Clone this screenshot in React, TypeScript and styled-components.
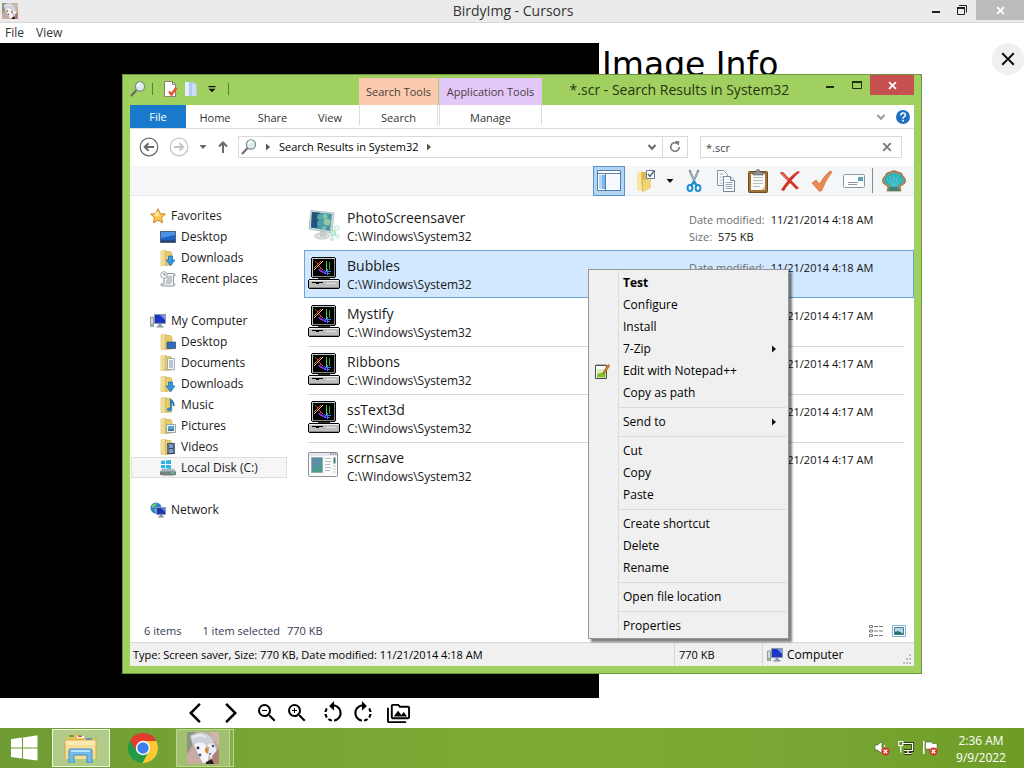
import React from 'react';
import styled, { createGlobalStyle, css } from 'styled-components';
import {
  MdArrowBackIosNew,
  MdArrowForwardIos,
  MdClose,
  MdOutlinePermMedia,
  MdRotateLeft,
  MdRotateRight,
  MdZoomIn,
  MdZoomOut,
} from 'react-icons/md';

const GlobalStyle = createGlobalStyle`
  * { box-sizing: border-box; }
  body { margin: 0; background: #fff; font-family: "Open Sans", "Noto Sans", sans-serif; font-size: 12px; line-height: 16px; color: #1a1a1a; }
  button, input { font: inherit; color: inherit; }
  ul { list-style: none; margin: 0; padding: 0; }
  svg { display: block; flex: none; }
`;

const plainButton = css`
  display: flex;
  align-items: center;
  justify-content: center;
  padding: 0;
  border: 0;
  background: none;
`;

/* ---------- Desktop and viewer window ---------- */

const Desktop = styled.div`
  position: relative;
  display: flex;
  flex-direction: column;
  min-height: 100vh;
`;

const ViewerTitleBar = styled.header`
  display: grid;
  grid-template-columns: 1fr auto 1fr;
  align-items: center;
  height: 23px;
  padding-left: 2px;
  background: #ebebeb;
  border-bottom: 1px solid #d8d8d8;
`;

const ViewerTitle = styled.h1`
  margin: 0;
  font-size: 14px;
  font-weight: 400;
  line-height: 22px;
  color: #333;
`;

const WindowButtons = styled.div`
  display: flex;
  align-self: start;
  justify-content: flex-end;
`;

const WindowButton = styled.button<{ $w: number; $bg?: string }>`
  ${plainButton}
  width: ${(p) => p.$w}px;
  height: 20px;
  background: ${(p) => p.$bg ?? 'none'};
`;

const ViewerMenu = styled.nav`
  display: flex;
  gap: 12px;
  height: 20px;
  padding-left: 5px;
  background: #fff;
`;

const ViewerMenuButton = styled.button`
  ${plainButton}
  height: 20px;
  color: #333;
`;

const ViewerBody = styled.main`
  display: grid;
  grid-template-columns: 58.5% 1fr;
  flex: 1;
`;

const ImageCanvas = styled.div`
  background: #000;
`;

const InfoPanel = styled.aside`
  display: flex;
  align-items: flex-start;
  justify-content: space-between;
  padding-left: 3px;
  background: #fff;
`;

const InfoHeading = styled.h2`
  margin: 2px 0 0;
  font-family: "DejaVu Sans", sans-serif;
  font-size: 33px;
  font-weight: 400;
  line-height: 40px;
  color: #000;
`;

const InfoClose = styled.button`
  ${plainButton}
  width: 32px;
  height: 32px;
  border-radius: 50%;
  background: #f0f0f0;
  color: #000;
`;

const ViewerTools = styled.div`
  display: flex;
  justify-content: center;
  width: 58%;
  height: 30px;
`;

const ToolPair = styled.div<{ $gap: number }>`
  display: flex;
  align-items: center;
  gap: ${(p) => p.$gap}px;
  margin: 0 6px;
`;

const ViewerTool = styled.button`
  ${plainButton}
  width: 24px;
  height: 24px;
  color: #000;
`;

/* ---------- Explorer window ---------- */

const Explorer = styled.section`
  position: absolute;
  top: 74px;
  right: 102px;
  bottom: 94px;
  left: 122px;
  display: flex;
  flex-direction: column;
  padding: 0 7px 7px;
  background: #a0d05f;
  border: 1px solid #6f9440;
`;

const ExplorerTitleBar = styled.header`
  display: flex;
  height: 30px;
`;

const QuickAccess = styled.div`
  display: flex;
  align-items: center;
  width: 229px;
  height: 28px;
`;

const QuickButton = styled.button`
  ${plainButton}
  width: 21px;
  height: 22px;
`;

const QuickRule = styled.span`
  width: 1px;
  height: 12px;
  margin: 0 6px;
  background: #5d7d35;
`;

const ContextLabel = styled.div<{ $w: number; $bg: string }>`
  width: ${(p) => p.$w}px;
  margin: 3px 1px 0 0;
  background: ${(p) => p.$bg};
  font-size: 11px;
  line-height: 28px;
  text-align: center;
  white-space: nowrap;
  color: #4a4038;
`;

const ExplorerTitle = styled.h2`
  flex: 1;
  margin: 0;
  font-size: 14px;
  font-weight: 400;
  line-height: 29px;
  text-align: center;
  white-space: nowrap;
  color: #27350f;
`;

const ExplorerPane = styled.div`
  display: flex;
  flex: 1;
  flex-direction: column;
  min-height: 0;
  background: #fff;
`;

const Ribbon = styled.div`
  display: flex;
  height: 24px;
  border-bottom: 1px solid #dadbdc;
`;

const RibbonTab = styled.button<{ $w: number; $kind?: 'file' | 'context' }>`
  ${plainButton}
  width: ${(p) => p.$w}px;
  height: 24px;
  padding-top: 2px;
  font-size: 11px;
  color: #333;
  ${(p) =>
    p.$kind === 'file' &&
    css`
      height: 23px;
      padding: 0;
      background: #1979ca;
      color: #fff;
    `}
  ${(p) =>
    p.$kind === 'context' &&
    css`
      height: 20px;
      margin-right: 1px;
      padding-top: 5px;
      border: solid #dcdcdc;
      border-width: 0 1px;
    `}
`;

const RibbonEnd = styled.div`
  display: flex;
  flex: 1;
  align-items: center;
  justify-content: flex-end;
  gap: 10px;
  padding-right: 4px;
`;

const IconButton = styled.button`
  ${plainButton}
`;

const AddressRow = styled.div`
  display: flex;
  align-items: center;
  height: 37px;
  padding: 0 12px 1px 9px;
`;

const NavButtons = styled.div`
  display: flex;
  align-items: center;
  gap: 10px;
  width: 99px;
`;

const AddressBox = styled.div`
  display: flex;
  flex: 1;
  align-items: center;
  height: 22px;
  padding-left: 2px;
  border: 1px solid #d9d9d9;
  gap: 7px;
  color: #000;
`;

const AddressText = styled.span`
  font-size: 11px;
  white-space: nowrap;
`;

const AddressEnd = styled.div`
  display: flex;
  align-items: center;
  gap: 5px;
  height: 20px;
  margin-left: auto;
`;

const RefreshButton = styled.button`
  ${plainButton}
  width: 25px;
  height: 20px;
  border-left: 1px solid #d9d9d9;
`;

const SearchBox = styled.label`
  display: flex;
  align-items: center;
  width: 202px;
  height: 22px;
  margin-left: 12px;
  padding: 0 9px 0 5px;
  border: 1px solid #d9d9d9;
`;

const SearchInput = styled.input`
  flex: 1;
  min-width: 0;
  height: 20px;
  padding: 0;
  border: 0;
  outline: 0;
  background: none;
  font-size: 11px;
  color: #444;
`;

const CommandBar = styled.div`
  display: flex;
  align-items: center;
  justify-content: flex-end;
  height: 30px;
  padding-right: 4px;
  background: #f5f6f7;
  border-bottom: 1px solid #e8e9ea;
`;

const CommandButton = styled.button<{ $w?: number; $active?: boolean }>`
  ${plainButton}
  width: ${(p) => p.$w ?? 32}px;
  height: 30px;
  ${(p) =>
    p.$active &&
    css`
      background: #b3d5f5;
      border: 1px solid #5b93c6;
    `}
`;

const CommandRule = styled.span`
  width: 1px;
  height: 25px;
  margin: 0 5px 0 6px;
  background: #8a8a8a;
`;

const Content = styled.div`
  display: flex;
  flex: 1;
  min-height: 0;
`;

const Sidebar = styled.nav`
  display: flex;
  flex-direction: column;
  gap: 21px;
  width: 157px;
  margin: 9px 17px 0 0;
`;

const TreeRow = styled.li<{ $top?: boolean; $current?: boolean }>`
  margin-left: 1px;
  border: 1px solid ${(p) => (p.$current ? '#dedede' : 'transparent')};
  background: ${(p) => (p.$current ? '#f6f6f6' : 'none')};
  padding-left: ${(p) => (p.$top ? 18 : 28)}px;
`;

const TreeLink = styled.a`
  display: flex;
  align-items: center;
  gap: 5px;
  height: 19px;
  color: #1a1a1a;
  text-decoration: none;
  white-space: nowrap;
`;

const FileList = styled.ul`
  flex: 1;
  padding-top: 6px;
`;

const FileRow = styled.li<{ $selected?: boolean; $rule?: boolean }>`
  position: relative;
  display: flex;
  height: 48px;
  padding: 7px 0 0 4px;
  ${(p) =>
    p.$selected &&
    css`
      background: #d1e8ff;
      box-shadow: inset 0 0 0 1px #69a3d8;
    `}
  ${(p) =>
    p.$rule &&
    css`
      &::after {
        content: '';
        position: absolute;
        right: 10px;
        bottom: -1px;
        left: 4px;
        height: 1px;
        background: #d6d6d6;
      }
    `}
`;

const FileText = styled.div`
  flex: 1;
  padding-left: 7px;
`;

const FileName = styled.div`
  margin-top: -1px;
  font-size: 14px;
  line-height: 20px;
`;

const FilePath = styled.div`
  line-height: 18px;
`;

const FileDetails = styled.dl`
  width: 225px;
  margin: 2px 0 0;
  font-size: 11px;
  line-height: 17px;
  white-space: nowrap;
`;

const Detail = styled.div`
  display: flex;
  gap: 6px;
  dt { color: #6d6d6d; }
  dd { margin: 0; color: #111; }
`;

const DetailsBar = styled.div`
  display: flex;
  align-items: center;
  height: 23px;
  padding: 1px 8px 0 14px;
  font-size: 11px;
  color: #333c50;
`;

const DetailsText = styled.span<{ $gap: number }>`
  margin-right: ${(p) => p.$gap}px;
`;

const ViewToggles = styled.div`
  display: flex;
  gap: 8px;
  margin-left: auto;
`;

const StatusBar = styled.footer`
  display: flex;
  height: 24px;
  background: #f0f0f0;
  border-top: 1px solid #d7d7d7;
  font-size: 11px;
  color: #000;
`;

const StatusCell = styled.div<{ $w?: number }>`
  display: flex;
  align-items: center;
  gap: 4px;
  ${(p) => (p.$w ? `width: ${p.$w}px;` : 'flex: 1;')}
  padding: 1px 0 0 3px;
  & + & { border-left: 1px solid #d7d7d7; padding-left: 4px; }
`;

const ZoneName = styled.span`
  font-size: 12px;
`;

const Grip = styled.span`
  align-self: flex-end;
  margin: 0 2px 2px auto;
`;

/* ---------- Context menu ---------- */

const ContextMenu = styled.ul`
  position: absolute;
  top: 269px;
  left: 588px;
  width: 201px;
  padding: 2px 0 1px;
  border: 1px solid #979797;
  background: linear-gradient(90deg, #f0f0f0 29px, #dcdcdc 29px, #dcdcdc 30px, #f0f0f0 30px);
  box-shadow: 3px 3px 2px rgba(0, 0, 0, 0.5);
`;

const MenuButton = styled.button<{ $strong?: boolean }>`
  display: grid;
  grid-template-columns: 34px 1fr 18px;
  align-items: center;
  width: 100%;
  height: 22px;
  padding: 0;
  border: 0;
  background: none;
  color: #000;
  font-weight: ${(p) => (p.$strong ? 700 : 400)};
  text-align: left;
`;

const MenuIcon = styled.span`
  padding-left: 5px;
`;

const MenuRule = styled.li`
  height: 1px;
  margin: 3px 2px 3px 30px;
  background: #d9d9d9;
`;

/* ---------- Taskbar ---------- */

const Taskbar = styled.footer`
  display: flex;
  align-items: center;
  height: 40px;
  background: linear-gradient(90deg, #6f9b34 0%, #76a532 25%, #7cab35 55%, #78a632 80%, #6d9c26 100%);
`;

const TaskButton = styled.button<{ $w: number; $frame?: 'active' | 'open' }>`
  ${plainButton}
  width: ${(p) => p.$w}px;
  height: 38px;
  ${(p) =>
    p.$frame === 'active' &&
    css`
      background: #b1cb88;
      border: 1px solid #eef5e0;
    `}
  ${(p) =>
    p.$frame === 'open' &&
    css`
      background: #a0bf6f;
      border: 1px solid #bfd598;
    `}
`;

const StackEdge = styled.span`
  width: 4px;
  height: 38px;
  margin-right: auto;
  border: solid #bfd598;
  border-width: 1px 1px 1px 0;
  background: #84ac49;
`;

const StartButton = styled(TaskButton)`
  padding-right: 4px;
`;

const Tray = styled.div`
  display: flex;
  gap: 8px;
`;

const Clock = styled.time`
  width: 86px;
  padding-top: 1px;
  color: #fff;
  line-height: 17px;
  text-align: center;
`;

/* ---------- Drawings ---------- */

const BirdPhoto = ({ size }: { size: number }) => (
  <svg width={size} height={size} viewBox="0 0 32 32">
    <rect width="32" height="32" fill="#c2a99e" />
    <path d="M0 0h9L6 12 0 22z" fill="#8b9680" />
    <path d="M22 0h10v14z" fill="#cdb7a6" />
    <path d="M3 4Q12-2 20 2q4 2 7 7l-6 6-8-3-7 1z" fill="#cdd2d8" />
    <path d="M5 6q7-5 14-1" stroke="#e9ecef" strokeWidth="2" fill="none" />
    <path d="M7 13q5-4 11-1l4 9-1 9-5 1-4-7z" fill="#f4f5f8" />
    <path d="M21 12l6-1 3 9-6 7-4-7z" fill="#e8edf5" />
    <path d="M18 16l4-1-1 7-3-2z" fill="#d0913f" />
    <path d="M19 30l6-3 2 5h-8z" fill="#28201e" />
    <path d="M25 24l7-8v16h-5z" fill="#b07f76" />
    <path d="M0 22l8-4 5 14H0z" fill="#c9aba3" />
    <circle cx="11" cy="16" r="1.400" fill="#2a2d45" />
    <circle cx="13" cy="23" r="1.400" fill="#3a59a0" />
    <circle cx="26" cy="14" r="1.200" fill="#39476e" />
    <circle cx="23" cy="22" r="1" fill="#55698e" />
  </svg>
);

const Magnifier = ({ size = 16 }: { size?: number }) => (
  <svg width={size} height={size} viewBox="0 0 16 16">
    <path d="M1.500 14.500l5-5.500" stroke="#6b6b6b" strokeWidth="2" strokeLinecap="round" />
    <circle cx="10" cy="5.500" r="4.600" fill="#dcecef" stroke="#7f8c8d" strokeWidth="1.200" />
    <path d="M7 5q1-3 4-3" stroke="#fff" strokeWidth="1.400" fill="none" />
  </svg>
);

const CheckedPage = () => (
  <svg width="16" height="16" viewBox="0 0 16 16">
    <path d="M2.500 0.500h8l3 3v12h-11z" fill="#fff" stroke="#8c7f74" />
    <path d="M10.500 0.500v3h3" fill="none" stroke="#8c7f74" />
    <path d="M7 10.500l2.500 3 5-7" fill="none" stroke="#e2532f" strokeWidth="2.400" />
  </svg>
);

const PaleFolder = () => (
  <svg width="16" height="16" viewBox="0 0 16 16">
    <path d="M2 1h5v14H2z" fill="#e3ecf8" />
    <path d="M6 1h6v2l2 1v11H6z" fill="#b3cbea" />
    <path d="M9 3h4v12H9z" fill="#cfdff3" />
  </svg>
);

const Minimize = ({ color = '#222' }: { color?: string }) => (
  <svg width="10" height="10" viewBox="0 0 10 10">
    <path d="M2 6h8v2H2z" fill={color} />
  </svg>
);

const Maximize = () => (
  <svg width="12" height="10" viewBox="0 0 12 10">
    <path d="M2.500 1.500h9v7h-9z" fill="none" stroke="#20300c" />
    <path d="M2 1h10v2H2z" fill="#20300c" />
  </svg>
);

const Restore = () => (
  <svg width="12" height="12" viewBox="0 0 12 12">
    <path d="M3 1.500h7.500v7" fill="none" stroke="#222" />
    <path d="M1.500 4h7v6.500h-7z" fill="none" stroke="#222" />
    <path d="M1 3h8v2H1z" fill="#222" />
  </svg>
);

const Cross = ({ color, width = 2, size = 9 }: { color: string; width?: number; size?: number }) => (
  <svg width={size} height={size} viewBox="0 0 10 10">
    <path d="M1.200 1.200l7.600 7.600M8.800 1.200L1.200 8.800" stroke={color} strokeWidth={width} />
  </svg>
);

const Chevron = ({ color = '#666' }: { color?: string }) => (
  <svg width="10" height="8" viewBox="0 0 10 8">
    <path d="M1.500 2L5 5.800 8.500 2" fill="none" stroke={color} strokeWidth="2" />
  </svg>
);

const Triangle = ({ dir, color }: { dir: 'down' | 'right'; color: string }) => (
  <svg width="8" height="8" viewBox="0 0 8 8">
    <path d={dir === 'down' ? 'M0.500 2h7L4 6z' : 'M2 0.500v7L6 4z'} fill={color} />
  </svg>
);

const CircleArrow = ({ forward }: { forward?: boolean }) => {
  const c = forward ? '#c4c4c4' : '#6a6a6a';
  return (
    <svg width="20" height="20" viewBox="0 0 20 20">
      <circle cx="10" cy="10" r="8.800" fill="#fff" stroke={c} strokeWidth="1.200" />
      <path
        d={forward ? 'M5 10h9M10.500 6.200l3.800 3.800-3.800 3.800' : 'M15 10H6M9.500 6.200L5.700 10l3.800 3.800'}
        fill="none"
        stroke={c}
        strokeWidth="2"
      />
    </svg>
  );
};

const UpArrow = () => (
  <svg width="12" height="14" viewBox="0 0 12 14">
    <path d="M6 13V2.500M2 6.500l4-4 4 4" fill="none" stroke="#6a6a6a" strokeWidth="2" />
  </svg>
);

const RefreshIcon = () => (
  <svg width="12" height="12" viewBox="0 0 12 12">
    <path d="M8.500 2.500a4.300 4.300 0 1 0 1.800 3.500" fill="none" stroke="#777" strokeWidth="1.600" />
    <path d="M6 0l4.500 0.300L9.500 5z" fill="#777" />
  </svg>
);

const HelpIcon = () => (
  <svg width="14" height="14" viewBox="0 0 14 14">
    <circle cx="7" cy="7" r="7" fill="#1d70c0" />
    <path d="M4.800 5.400q0-2.400 2.300-2.400t2.200 2q0 1.200-1.200 1.900T7 8.600" fill="none" stroke="#fff" strokeWidth="1.600" />
    <path d="M6.100 9.800h1.800v1.700H6.100z" fill="#fff" />
  </svg>
);

const PaneIcon = () => (
  <svg width="24" height="22" viewBox="0 0 24 22">
    <path d="M0.500 0.500h23v20H0.500z" fill="#fff" stroke="#4d7dae" />
    <path d="M1 3.500h22" stroke="#4d7dae" />
    <path d="M2 5h6v14H2z" fill="#7db5ef" />
    <path d="M2 5h3v14H2z" fill="#b5d7f7" />
    <path d="M8.500 4v16" stroke="#4d7dae" />
    <path d="M10 5h12v14H10z" fill="#f6fafe" />
  </svg>
);

const SelectFolder = () => (
  <svg width="22" height="24" viewBox="0 0 22 24">
    <path d="M2 3l5-1 1 19-6 1z" fill="#f7e7a4" />
    <path d="M6 3h5l2 3v14l-6 3z" fill="#ddb84c" />
    <path d="M8 11l8-1v9l-8 4z" fill="#f0d47a" />
    <path d="M11.500 1.500h8v8h-8z" fill="#fff" stroke="#6f8090" />
    <path d="M13 5l2 2.500 4-5.500" fill="none" stroke="#44607a" strokeWidth="1.300" />
  </svg>
);

const Scissors = () => (
  <svg width="16" height="24" viewBox="0 0 16 24">
    <path d="M3.500 1l6 14M12.500 1l-6 14" stroke="#6f8799" strokeWidth="2" />
    <path d="M4.500 3l4 9M11.500 3l-3.500 9" stroke="#c6d4de" strokeWidth="0.700" />
    <ellipse cx="4" cy="19" rx="2.400" ry="3" fill="none" stroke="#1d8fd0" strokeWidth="2" />
    <ellipse cx="12" cy="19" rx="2.400" ry="3" fill="none" stroke="#1d8fd0" strokeWidth="2" />
    <path d="M5 16.500l3-3.500 3 3.500" fill="none" stroke="#1d8fd0" strokeWidth="2.200" />
  </svg>
);

const CopyPages = () => (
  <svg width="20" height="24" viewBox="0 0 20 24">
    <path d="M1.500 1.500h6l4 4v11h-10z" fill="#fff" stroke="#8596a5" />
    <path d="M3.500 5h4M3.500 8h4M3.500 11h3M3.500 14h3" stroke="#9fb2c2" />
    <path d="M7.500 7.500h7l4 4v11h-11z" fill="#fff" stroke="#75889a" />
    <path d="M14.500 7.500v4h4" fill="#e5edf4" stroke="#75889a" />
    <path d="M9.500 13.500h7M9.500 15.500h7M9.500 17.500h7M9.500 19.500h7" stroke="#92a5b6" />
  </svg>
);

const Clipboard = () => (
  <svg width="20" height="24" viewBox="0 0 20 24">
    <rect x="0.500" y="2.500" width="19" height="21" rx="1" fill="#9d7238" stroke="#6f4c1d" />
    <path d="M3 5h14v16H3z" fill="#fbfbf5" />
    <path d="M5 8.500h10M5 11.500h10M5 14.500h10M5 17.500h7" stroke="#b9bfc4" />
    <path d="M5 6V3h3q0-2.500 2-2.500T12 3h3v3z" fill="#8b9297" stroke="#555" strokeWidth="0.600" />
    <path d="M13 21l4-4v4z" fill="#d5c9a4" />
  </svg>
);

const DeleteCross = () => (
  <svg width="22" height="22" viewBox="0 0 22 22">
    <path d="M1 3q2-2 4 0l5 5.500Q14 4 19 1l2 1q-5 4-8.500 8.500L20 18l-2.500 1.500L11 13q-4 4-6 8l-3-1q3-5 6.500-9z" fill="#d33226" />
    <path d="M3 3.500l6.500 7" stroke="#ee7a69" strokeWidth="1.200" />
  </svg>
);

const OrangeCheck = () => (
  <svg width="22" height="22" viewBox="0 0 22 22">
    <path d="M1 13l4-3 3.500 4Q13 6 19 1l2 1Q14 11 10.500 21H8z" fill="#ea8a52" stroke="#d2672f" strokeWidth="0.700" />
  </svg>
);

const Envelope = () => (
  <svg width="22" height="16" viewBox="0 0 22 16">
    <rect x="0.500" y="1.500" width="21" height="13" rx="1" fill="#fdfdfd" stroke="#8b98a4" />
    <path d="M15 4h5v4h-5z" fill="#56a3b8" />
    <path d="M5 9.500h10M5 11.500h9" stroke="#8b98a4" />
  </svg>
);

const Shell = () => (
  <svg width="24" height="22" viewBox="0 0 24 22">
    <path d="M1 13q-2-4 2-7 1-4 5-4 4-3 8 0 4 0 5 4 4 3 2 7l-5 4 1 4H5l1-4z" fill="#b98556" stroke="#8a6240" strokeWidth="0.700" />
    <path d="M2.500 12q-1-3 1.500-5 1-3 4-3 4-2.500 8 0 3 0 4 3 2.500 2 1.500 5l-6.500 5h-6z" fill="#2eb3be" />
    <path d="M12 16V5M11 16L8 6M13 16l3-10M10 16L5 9M14 16l5-7" stroke="#5fcdd3" strokeWidth="0.900" />
    <path d="M8 17h8l2 4H6z" fill="#3f8577" />
  </svg>
);

const Star = () => (
  <svg width="16" height="16" viewBox="0 0 16 16">
    <path d="M8 0.700l2.200 4.800 5.200 0.600-3.900 3.500 1.100 5.200L8 12.200l-4.600 2.600 1.100-5.200L0.600 6.100l5.200-0.600z" fill="#fcc84a" stroke="#cf842b" />
    <path d="M8 3l1.300 3.600L8 9 4 7z" fill="#ffe9a4" />
  </svg>
);

const DesktopScreen = () => (
  <svg width="16" height="16" viewBox="0 0 16 16">
    <path d="M0.500 2.500h15v11H0.500z" fill="#1d63c5" stroke="#4c6178" />
    <path d="M1 3h14v3L1 9z" fill="#4b91e4" />
    <path d="M1 11.500h14v1.500H1z" fill="#263e61" />
  </svg>
);

const FolderWith = ({ children }: { children?: React.ReactNode }) => (
  <svg width="16" height="16" viewBox="0 0 16 16">
    <path d="M1 1l5-1v15l-5 0.500z" fill="#f8eaa8" stroke="#d4b75b" strokeWidth="0.600" />
    <path d="M5 1.500h5.500l1.500 2v11.500L5 15.500z" fill="#e6cb6c" stroke="#c7a548" strokeWidth="0.600" />
    <path d="M3 2v13" stroke="#e7cf7c" />
    {children}
  </svg>
);

const DownGlyph = () => <path d="M8.500 6h4v4h2.500l-4.500 5.700L6 10h2.500z" fill="#3498e0" stroke="#1b67ac" strokeWidth="0.700" />;
const DeskGlyph = () => <path d="M7 8h8.500v6.500H7z" fill="#2b6cc4" stroke="#44566c" strokeWidth="0.800" />;
const DocGlyph = () => (
  <>
    <path d="M7.500 3.500h7v11h-7z" fill="#f6f8fb" stroke="#8b98b0" strokeWidth="0.800" />
    <path d="M9 6h4M9 8h4M9 10h4M9 12h4" stroke="#7685ad" strokeWidth="0.900" />
  </>
);
const NoteGlyph = () => (
  <>
    <path d="M10.800 12V3q3 2 3 6" fill="none" stroke="#2773b5" strokeWidth="1.700" />
    <ellipse cx="9.200" cy="12.500" rx="2.400" ry="1.900" fill="#2f86cc" />
  </>
);
const PictureGlyph = () => (
  <>
    <path d="M6.500 6.500h9v8h-9z" fill="#eaf3f8" stroke="#8797a4" strokeWidth="0.800" />
    <path d="M8 8h6v3H8z" fill="#5aa4d2" />
    <path d="M8 11h6v2H8z" fill="#4d7d88" />
  </>
);
const VideoGlyph = () => (
  <>
    <path d="M7 4h8v11H7z" fill="#394763" />
    <path d="M9.200 5h3.600v4H9.200zM9.200 10h3.600v4H9.200z" fill="#7da2cf" />
    <path d="M8 4.500v10M14 4.500v10" stroke="#dfe5ed" strokeWidth="0.900" strokeDasharray="1 1" />
  </>
);

const RecentIcon = () => (
  <svg width="16" height="16" viewBox="0 0 16 16">
    <path d="M4 2.500h9.500q2 0 1.500 2h-1.500V13h1.500q0 2-1.500 2H2.500q-2 0-1.500-2h3z" fill="#edf1f2" stroke="#7f8c93" strokeWidth="0.900" />
    <path d="M7 6h5M7 8h5M6 10h6M6 12h5" stroke="#88959c" strokeWidth="0.900" />
    <circle cx="4" cy="4" r="3.300" fill="#fff" stroke="#93a0a6" strokeWidth="0.900" />
    <path d="M4 2v2h2" fill="none" stroke="#5f6d75" strokeWidth="0.900" />
  </svg>
);

const ComputerIcon = () => (
  <svg width="16" height="16" viewBox="0 0 16 16">
    <path d="M0.500 4h3v9.500h-3z" fill="#d4d8dc" stroke="#7f8891" strokeWidth="0.800" />
    <path d="M1.300 11h1.400v1.500H1.300z" fill="#3ea83e" />
    <path d="M4.500 1.500h11v9h-11z" fill="#1c36c4" stroke="#8d99a8" />
    <path d="M10 2h5v5z" fill="#7791ee" />
    <path d="M8.500 11h3v2h2v1.500h-7V13h2z" fill="#8795a4" />
  </svg>
);

const DiskIcon = () => (
  <svg width="16" height="16" viewBox="0 0 16 16">
    <path d="M1 1l4-0.500V4H1zM6 0.400L11 0v4H6zM1 5h4v3.500L1 8zM6 5h5v4L6 8.600z" fill="#2cb3df" />
    <path d="M2 9h12l2 3H0z" fill="#a9b6ba" />
    <path d="M0 11.500h16V15q-8 1-16 0z" fill="#718287" />
    <path d="M11 13h3" stroke="#60e070" strokeWidth="1.200" />
  </svg>
);

const NetworkIcon = () => (
  <svg width="16" height="16" viewBox="0 0 16 16">
    <circle cx="6" cy="6" r="5.500" fill="#2f80cf" />
    <path d="M2 3q3-3 5-1L5 5 2 6zM4 7l4 1-2 3z" fill="#72c264" />
    <path d="M6.500 5.500h9v7h-9z" fill="#1a35b5" stroke="#8d9aae" />
    <path d="M11 6h4v4z" fill="#6583e6" />
    <path d="M9.500 13h3v1.500h1.500v1H8v-1h1.500z" fill="#7d8998" />
  </svg>
);

const PhotoSaverIcon = () => (
  <svg width="32" height="32" viewBox="0 0 32 32">
    <ellipse cx="14" cy="27" rx="7.500" ry="3.200" fill="#d9dfdd" stroke="#b2bcb9" strokeWidth="0.600" />
    <path d="M12 22l6 1v5h-6z" fill="#c5cfcc" />
    <path d="M3 1.500L26 4l-2 20L1 20z" fill="#cfdcdb" stroke="#a5b6b6" strokeWidth="0.800" />
    <path d="M4 3l20 2-2 17-19-3.500z" fill="#4a94a0" />
    <path d="M4 3l8 0.800-3 15.500-6-0.800z" fill="#1f5680" />
    <circle cx="12" cy="8" r="3" fill="#5fa9a0" />
    <circle cx="17" cy="7.500" r="2.500" fill="#82c4b4" />
    <circle cx="19" cy="13" r="3.500" fill="#8bc8a8" />
    <circle cx="12" cy="14.500" r="3" fill="#4f9fb0" />
    <circle cx="16" cy="19" r="2" fill="#79bfbb" />
    <circle cx="29" cy="19" r="2.300" fill="#f0faf5" stroke="#b5e2cf" strokeWidth="0.800" />
    <circle cx="25" cy="24" r="2.800" fill="#c9f0d8" stroke="#8fd4b0" strokeWidth="0.800" />
    <circle cx="29.500" cy="27.500" r="1.800" fill="#f0faf5" stroke="#b5e2cf" strokeWidth="0.800" />
    <circle cx="24" cy="30" r="1.500" fill="#e0f5ea" stroke="#a7dcc4" strokeWidth="0.800" />
  </svg>
);

const SaverIcon = () => (
  <svg width="32" height="32" viewBox="0 0 32 32" shapeRendering="crispEdges">
    <path d="M4 0h23v1h1v19h-1v1H4v-1H3V1h1z" fill="#000" />
    <path d="M4 1h23v1H4zM4 1h1v19H4z" fill="#c4c8c8" />
    <path d="M26 2h1v18h-1zM5 19h22v1H5z" fill="#858585" />
    <path d="M5 2h21v17H5z" fill="#000" />
    <path d="M10 21h12v1H10z" fill="#333" />
    <path d="M1 22h30v1h1v8h-1v1H1v-1H0v-8h1z" fill="#000" />
    <path d="M1 23h30v8H1z" fill="#bdbdbd" />
    <path d="M1 23h30v1H1z" fill="#eee" />
    <path d="M1 30h30v1H1z" fill="#8b8b8b" />
    <path d="M4 25h11v1h-4v1H8v-1H4z" fill="#000" />
    <path d="M18 26h10v1H18z" fill="#e0e0e0" />
    <path d="M14 4h1v1h-1zM13 5h1v1h-1zM12 6h1v1h-1zM11 7h1v1h-1zM10 8h1v1h-1zM9 9h1v1H9zM8 10h1v1H8zM7 11h1v1H7zM6 12h1v1H6z" fill="#ffc850" />
    <path d="M12 4h1v1h-1zM11 5h1v1h-1zM10 6h1v1h-1zM9 7h1v1H9zM8 8h1v1H8zM7 9h1v1H7zM6 10h1v1H6z" fill="#e2622a" />
    <path d="M7 4h1v1H7zM8 5h1v1H8zM9 6h1v1H9zM11 9h1v1h-1zM12 10h1v1h-1zM13 11h1v1h-1z" fill="#d83a28" />
    <path d="M10 12h2v1h-2zM11 13h3v1h-3zM12 14h4v1h-4zM14 15h4v1h-4zM16 16h4v1h-4z" fill="#7a34e0" />
    <path d="M12 11h1v1h-1zM14 12h1v1h-1zM16 13h1v1h-1z" fill="#b23ad0" />
    <path d="M18 4h1v10h-1z" fill="#38d04a" />
    <path d="M21 5h1v8h-1z" fill="#2aa33c" />
    <path d="M17 14h6v1h-6zM19 12h1v6h-1zM18 16h4v1h-4z" fill="#3c7bf0" />
  </svg>
);

const AppIcon = () => (
  <svg width="32" height="32" viewBox="0 0 32 32">
    <rect x="0.500" y="3.500" width="29" height="24" rx="1" fill="#fbfbfb" stroke="#8a8f98" />
    <path d="M1 4h28v3H1z" fill="#e3e6ea" />
    <path d="M22 5h1.500M24.500 5H26M27 5h1.500" stroke="#555" />
    <path d="M3.500 8.500h11v15h-11z" fill="#4b9a8c" stroke="#8fb1b5" />
    <path d="M4 9h10v5L4 20z" fill="#5d8fa4" />
    <path d="M17 9.500h6M17 12.500h6M17 15.500h5M17 18.500h6M17 21.500h5" stroke="#b3b9bf" />
    <path d="M25.500 8.500h2v6h-2z" fill="#3f7873" />
    <path d="M25.500 17h2M25.500 20h2M25.500 23h2" stroke="#b3b9bf" />
  </svg>
);

const NotepadIcon = () => (
  <svg width="16" height="16" viewBox="0 0 16 16">
    <path d="M1.500 2.500h11v13h-11z" fill="#fff" stroke="#4b4b45" />
    <path d="M3 8h8.500v6.500H3z" fill="#86bd35" />
    <path d="M3 6h8v3L3 11z" fill="#d9ecb3" />
    <path d="M3 1v2M5 1v2M7 1v2M9 1v2M11 1v2" stroke="#555" strokeWidth="0.800" />
    <path d="M9 11l1-3 4-6.500 1.700 1-4 6.500z" fill="#e08a2c" stroke="#7c4a18" strokeWidth="0.600" />
  </svg>
);

const DetailsViewIcon = () => (
  <svg width="16" height="14" viewBox="0 0 16 14">
    <path d="M1.500 1.500h3v2h-3zM1.500 6h3v2h-3zM1.500 10.500h3v2h-3z" fill="#fff" stroke="#777" />
    <path d="M6 2.500h4M11 2.500h4M6 7h4M11 7h4M6 11.500h4M11 11.500h4" stroke="#777" />
  </svg>
);

const LargeViewIcon = () => (
  <svg width="14" height="12" viewBox="0 0 14 12">
    <path d="M0.500 0.500h13v11H0.500z" fill="#fff" stroke="#7ab6d8" />
    <path d="M2.500 2.500h9v7h-9z" fill="#a9d6ea" stroke="#55788a" />
    <path d="M3 9V7l3-1 5 2.500V9z" fill="#2b6f6c" />
  </svg>
);

const GripDots = () => (
  <svg width="10" height="10" viewBox="0 0 10 10">
    <path d="M7 0h2v2H7zM7 4h2v2H7zM7 8h2v2H7zM4 4h2v2H4zM4 8h2v2H4zM1 8h2v2H1z" fill="#bcbccb" />
  </svg>
);

const WindowsLogo = () => (
  <svg width="28" height="26" viewBox="0 0 28 26">
    <path d="M1 4.200L12 2.600v10H1zM13 2.400L27.500 0.300v12.300H13zM1 13.600h11v10L1 22zM13 13.600h14.500v12L13 23.700z" fill="#fff" />
  </svg>
);

const ExplorerLogo = () => (
  <svg width="34" height="30" viewBox="0 0 34 30">
    <path d="M3 3l5-2h5v4h17v4H3z" fill="#e9bf5a" />
    <path d="M5 2h5v2H5z" fill="#57a64b" />
    <path d="M13 3h7v2h-7z" fill="#fff" />
    <path d="M14 2.500h4v1.500h-4z" fill="#d3503b" />
    <path d="M22 5h6v2h-6z" fill="#4d91c4" />
    <path d="M1 7h31v19H1z" fill="#f6de94" />
    <path d="M1 7h31v5H1z" fill="#fae9b3" />
    <path d="M1 26V7h31v19" fill="none" stroke="#d3aa4d" />
    <path d="M5 30V17.500q0-1.500 1.500-1.500h20q1.500 0 1.500 1.500V30h-5v-8H10v8z" fill="#72bbe8" stroke="#3f8fc9" />
    <path d="M7 18h19" stroke="#d4effc" strokeWidth="1.500" />
  </svg>
);

const ChromeLogo = () => (
  <svg width="30" height="30" viewBox="0 0 30 30">
    <circle cx="15" cy="15" r="15" fill="#229a48" />
    <path d="M15 8h13.300A15 15 0 0 1 14.500 30L21.500 17z" fill="#fcc934" />
    <path d="M2 7.500A15 15 0 0 1 28.300 8H15L9 18.500z" fill="#e33b2e" />
    <circle cx="15" cy="15" r="7.200" fill="#fff" />
    <circle cx="15" cy="15" r="5.700" fill="#3f7fea" />
  </svg>
);

const ErrorBadge = () => (
  <g>
    <circle cx="11.500" cy="11.500" r="4" fill="#d8372d" />
    <path d="M9.800 9.800l3.400 3.400M13.200 9.800l-3.400 3.400" stroke="#fff" strokeWidth="1.300" />
  </g>
);

const VolumeIcon = () => (
  <svg width="16" height="16" viewBox="0 0 16 16">
    <path d="M1 5h2.500L8 1.500v12L3.500 10H1z" fill="#fff" stroke="#38511a" strokeWidth="0.600" />
    <path d="M10 5q1 1 1 2" stroke="#fff" fill="none" />
    <ErrorBadge />
  </svg>
);

const LanIcon = () => (
  <svg width="16" height="16" viewBox="0 0 16 16">
    <path d="M5 3.500h9.500v7H6M10 10.500v3M6.500 13.500h7" fill="none" stroke="#243710" strokeWidth="2.800" />
    <path d="M5 3.500h9.500v7H6M10 10.500v3M6.500 13.500h7" fill="none" stroke="#fff" strokeWidth="1.200" />
    <path d="M0.800 1.500h4v4h-4zM2.800 5.500v7" fill="#5d7d2d" stroke="#fff" strokeWidth="1.200" />
  </svg>
);

const FlagIcon = () => (
  <svg width="16" height="16" viewBox="0 0 16 16">
    <path d="M1 1h1.500v13H1z" fill="#fff" />
    <path d="M3.500 2h6l1 1.500H15v7H9L8 9H3.500z" fill="#fff" stroke="#38511a" strokeWidth="0.500" />
    <ErrorBadge />
  </svg>
);

/* ---------- Data ---------- */

type TreeItem = { label: string; icon: React.ReactNode; top?: boolean; current?: boolean };

const tree: TreeItem[][] = [
  [
    { label: 'Favorites', icon: <Star />, top: true },
    { label: 'Desktop', icon: <DesktopScreen /> },
    { label: 'Downloads', icon: <FolderWith><DownGlyph /></FolderWith> },
    { label: 'Recent places', icon: <RecentIcon /> },
  ],
  [
    { label: 'My Computer', icon: <ComputerIcon />, top: true },
    { label: 'Desktop', icon: <FolderWith><DeskGlyph /></FolderWith> },
    { label: 'Documents', icon: <FolderWith><DocGlyph /></FolderWith> },
    { label: 'Downloads', icon: <FolderWith><DownGlyph /></FolderWith> },
    { label: 'Music', icon: <FolderWith><NoteGlyph /></FolderWith> },
    { label: 'Pictures', icon: <FolderWith><PictureGlyph /></FolderWith> },
    { label: 'Videos', icon: <FolderWith><VideoGlyph /></FolderWith> },
    { label: 'Local Disk (C:)', icon: <DiskIcon />, current: true },
  ],
  [{ label: 'Network', icon: <NetworkIcon />, top: true }],
];

const files = [
  { name: 'PhotoScreensaver', time: '4:18 AM', size: '575 KB', icon: <PhotoSaverIcon /> },
  { name: 'Bubbles', time: '4:18 AM', size: '770 KB', icon: <SaverIcon />, selected: true },
  { name: 'Mystify', time: '4:17 AM', icon: <SaverIcon />, rule: true },
  { name: 'Ribbons', time: '4:17 AM', icon: <SaverIcon />, rule: true },
  { name: 'ssText3d', time: '4:17 AM', icon: <SaverIcon />, rule: true },
  { name: 'scrnsave', time: '4:17 AM', icon: <AppIcon /> },
];

type MenuEntry = { label: string; strong?: boolean; sub?: boolean; icon?: React.ReactNode } | null;

const menu: MenuEntry[] = [
  { label: 'Test', strong: true },
  { label: 'Configure' },
  { label: 'Install' },
  { label: '7-Zip', sub: true },
  { label: 'Edit with Notepad++', icon: <NotepadIcon /> },
  { label: 'Copy as path' },
  null,
  { label: 'Send to', sub: true },
  null,
  { label: 'Cut' },
  { label: 'Copy' },
  { label: 'Paste' },
  null,
  { label: 'Create shortcut' },
  { label: 'Delete' },
  { label: 'Rename' },
  null,
  { label: 'Open file location' },
  null,
  { label: 'Properties' },
];

/* ---------- Page ---------- */

export default function App() {
  return (
    <Desktop>
      <GlobalStyle />
      <ViewerTitleBar>
        <BirdPhoto size={16} />
        <ViewerTitle>BirdyImg - Cursors</ViewerTitle>
        <WindowButtons>
          <WindowButton $w={26} aria-label="Minimize"><Minimize /></WindowButton>
          <WindowButton $w={28} aria-label="Restore"><Restore /></WindowButton>
          <WindowButton $w={48} $bg="#bcbcbc" aria-label="Close"><Cross color="#fff" /></WindowButton>
        </WindowButtons>
      </ViewerTitleBar>
      <ViewerMenu>
        <ViewerMenuButton>File</ViewerMenuButton>
        <ViewerMenuButton>View</ViewerMenuButton>
      </ViewerMenu>
      <ViewerBody>
        <ImageCanvas />
        <InfoPanel>
          <InfoHeading>Image Info</InfoHeading>
          <InfoClose aria-label="Close image info"><MdClose size={22} /></InfoClose>
        </InfoPanel>
      </ViewerBody>
      <ViewerTools>
        <ToolPair $gap={12}>
          <ViewerTool aria-label="Previous"><MdArrowBackIosNew size={24} /></ViewerTool>
          <ViewerTool aria-label="Next"><MdArrowForwardIos size={24} /></ViewerTool>
        </ToolPair>
        <ToolPair $gap={6}>
          <ViewerTool aria-label="Zoom out"><MdZoomOut size={24} /></ViewerTool>
          <ViewerTool aria-label="Zoom in"><MdZoomIn size={24} /></ViewerTool>
        </ToolPair>
        <ToolPair $gap={6}>
          <ViewerTool aria-label="Rotate left"><MdRotateLeft size={26} /></ViewerTool>
          <ViewerTool aria-label="Rotate right"><MdRotateRight size={26} /></ViewerTool>
        </ToolPair>
        <ToolPair $gap={6}>
          <ViewerTool aria-label="Open gallery"><MdOutlinePermMedia size={23} /></ViewerTool>
        </ToolPair>
      </ViewerTools>

      <Taskbar>
        <StartButton $w={52} aria-label="Start"><WindowsLogo /></StartButton>
        <TaskButton $w={58} $frame="active" aria-label="File Explorer"><ExplorerLogo /></TaskButton>
        <TaskButton $w={66} aria-label="Chrome"><ChromeLogo /></TaskButton>
        <TaskButton $w={54} $frame="open" aria-label="BirdyImg"><BirdPhoto size={32} /></TaskButton>
        <StackEdge />
        <Tray>
          <VolumeIcon />
          <LanIcon />
          <FlagIcon />
        </Tray>
        <Clock>2:36 AM<br />9/9/2022</Clock>
      </Taskbar>

      <Explorer>
        <ExplorerTitleBar>
          <QuickAccess>
            <Magnifier />
            <QuickRule />
            <QuickButton aria-label="Properties"><CheckedPage /></QuickButton>
            <QuickButton aria-label="New folder"><PaleFolder /></QuickButton>
            <QuickButton aria-label="Customize toolbar">
              <svg width="8" height="8" viewBox="0 0 8 8">
                <path d="M0.500 1h7v1.200h-7zM0.500 3.800h7L4 7.300z" fill="#111" />
              </svg>
            </QuickButton>
            <QuickRule />
          </QuickAccess>
          <ContextLabel $w={79} $bg="#fbcbaf">Search Tools</ContextLabel>
          <ContextLabel $w={103} $bg="#e2c7f8">Application Tools</ContextLabel>
          <ExplorerTitle>*.scr - Search Results in System32</ExplorerTitle>
          <WindowButtons>
            <WindowButton $w={26} aria-label="Minimize"><Minimize color="#20300c" /></WindowButton>
            <WindowButton $w={28} aria-label="Maximize"><Maximize /></WindowButton>
            <WindowButton $w={44} $bg="#c75050" aria-label="Close"><Cross color="#fff" /></WindowButton>
          </WindowButtons>
        </ExplorerTitleBar>
        <ExplorerPane>
          <Ribbon>
            <RibbonTab $w={56} $kind="file">File</RibbonTab>
            <RibbonTab $w={58}>Home</RibbonTab>
            <RibbonTab $w={57}>Share</RibbonTab>
            <RibbonTab $w={58}>View</RibbonTab>
            <RibbonTab $w={79} $kind="context">Search</RibbonTab>
            <RibbonTab $w={103} $kind="context">Manage</RibbonTab>
            <RibbonEnd>
              <IconButton aria-label="Expand ribbon"><Chevron color="#999" /></IconButton>
              <IconButton aria-label="Help"><HelpIcon /></IconButton>
            </RibbonEnd>
          </Ribbon>
          <AddressRow>
            <NavButtons>
              <IconButton aria-label="Back"><CircleArrow /></IconButton>
              <IconButton aria-label="Forward"><CircleArrow forward /></IconButton>
              <IconButton aria-label="Recent locations"><Triangle dir="down" color="#666" /></IconButton>
              <IconButton aria-label="Up"><UpArrow /></IconButton>
            </NavButtons>
            <AddressBox>
              <Magnifier />
              <Triangle dir="right" color="#555" />
              <AddressText>Search Results in System32</AddressText>
              <Triangle dir="right" color="#555" />
              <AddressEnd>
                <IconButton aria-label="Address history"><Chevron /></IconButton>
                <RefreshButton aria-label="Refresh"><RefreshIcon /></RefreshButton>
              </AddressEnd>
            </AddressBox>
            <SearchBox>
              <SearchInput aria-label="Search" defaultValue="*.scr" />
              <IconButton aria-label="Clear search"><Cross color="#777" width={1.8} size={10} /></IconButton>
            </SearchBox>
          </AddressRow>
          <CommandBar>
            <CommandButton $active aria-label="Navigation pane"><PaneIcon /></CommandButton>
            <CommandButton $w={41} aria-label="Select"><SelectFolder /></CommandButton>
            <CommandButton $w={8} aria-label="Select options"><Triangle dir="down" color="#111" /></CommandButton>
            <CommandButton $w={40} aria-label="Cut"><Scissors /></CommandButton>
            <CommandButton $w={24} aria-label="Copy"><CopyPages /></CommandButton>
            <CommandButton $w={40} aria-label="Paste"><Clipboard /></CommandButton>
            <CommandButton $w={24} aria-label="Delete"><DeleteCross /></CommandButton>
            <CommandButton $w={40} aria-label="Properties"><OrangeCheck /></CommandButton>
            <CommandButton $w={24} aria-label="E-mail"><Envelope /></CommandButton>
            <CommandRule />
            <CommandButton aria-label="Shell settings"><Shell /></CommandButton>
          </CommandBar>
          <Content>
            <Sidebar aria-label="Folders">
              {tree.map((group) => (
                <ul key={group[0].label}>
                  {group.map((item) => (
                    <TreeRow key={item.label} $top={item.top} $current={item.current}>
                      <TreeLink href="#">{item.icon}{item.label}</TreeLink>
                    </TreeRow>
                  ))}
                </ul>
              ))}
            </Sidebar>
            <FileList>
              {files.map((f) => (
                <FileRow key={f.name} $selected={f.selected} $rule={f.rule}>
                  {f.icon}
                  <FileText>
                    <FileName>{f.name}</FileName>
                    <FilePath>C:\Windows\System32</FilePath>
                  </FileText>
                  <FileDetails>
                    <Detail><dt>Date modified:</dt><dd>11/21/2014 {f.time}</dd></Detail>
                    {f.size && <Detail><dt>Size:</dt><dd>{f.size}</dd></Detail>}
                  </FileDetails>
                </FileRow>
              ))}
            </FileList>
          </Content>
          <DetailsBar>
            <DetailsText $gap={21}>6 items</DetailsText>
            <DetailsText $gap={7}>1 item selected</DetailsText>
            <DetailsText $gap={0}>770 KB</DetailsText>
            <ViewToggles>
              <IconButton aria-label="Details view"><DetailsViewIcon /></IconButton>
              <IconButton aria-label="Large icons view"><LargeViewIcon /></IconButton>
            </ViewToggles>
          </DetailsBar>
          <StatusBar>
            <StatusCell>Type: Screen saver, Size: 770 KB, Date modified: 11/21/2014 4:18 AM</StatusCell>
            <StatusCell $w={88}>770 KB</StatusCell>
            <StatusCell $w={152}><ComputerIcon /><ZoneName>Computer</ZoneName><Grip><GripDots /></Grip></StatusCell>
          </StatusBar>
        </ExplorerPane>
      </Explorer>

      <ContextMenu role="menu">
        {menu.map((entry, i) =>
          entry ? (
            <li key={entry.label} role="none">
              <MenuButton role="menuitem" $strong={entry.strong}>
                <MenuIcon>{entry.icon}</MenuIcon>
                {entry.label}
                {entry.sub && <Triangle dir="right" color="#111" />}
              </MenuButton>
            </li>
          ) : (
            <MenuRule key={i} role="separator" />
          ),
        )}
      </ContextMenu>
    </Desktop>
  );
}
